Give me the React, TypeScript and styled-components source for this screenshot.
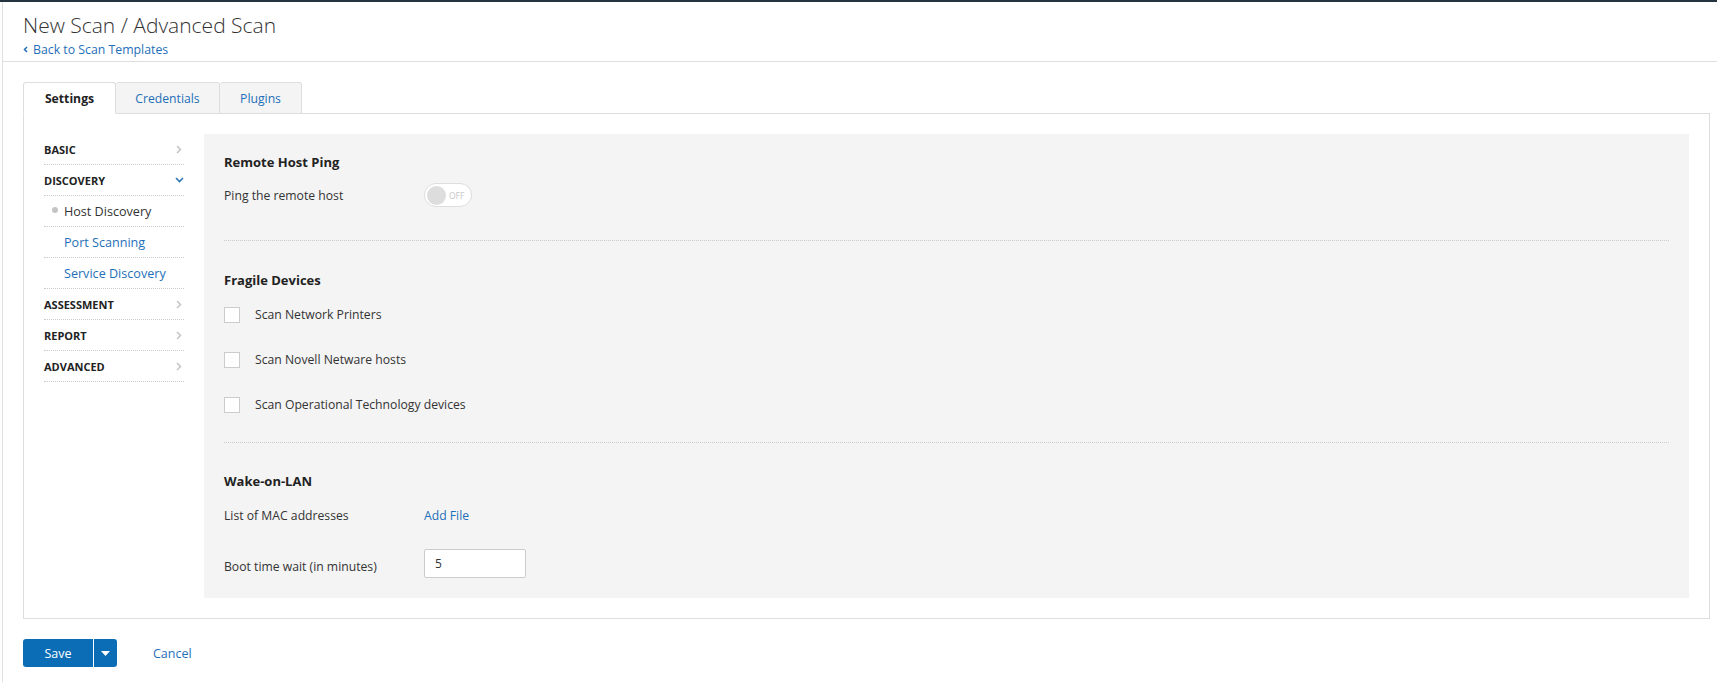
import React, { useState } from 'react';
import styled, { createGlobalStyle } from 'styled-components';

const GlobalStyle = createGlobalStyle`
  body {
    margin: 0;
    background: #fff;
    font-family: 'Open Sans', 'Noto Sans', sans-serif;
    font-size: 12.2px;
    color: #333;
  }
  * {
    box-sizing: border-box;
  }
`;

const TopBar = styled.div`
  height: 2px;
  background: #263440;
`;

const Page = styled.div`
  margin-left: 2px;
  min-height: 680px;
  border-left: 1px solid #e0e0e0;
`;

const Header = styled.div`
  height: 60px;
  padding: 10px 0 0 20px;
  border-bottom: 1px solid #ddd;
`;

const Title = styled.h1`
  margin: 0;
  font-size: 21px;
  font-weight: 300;
  line-height: 26px;
  color: #333;
`;

const BackLink = styled.a`
  display: flex;
  align-items: center;
  gap: 5px;
  margin-top: 3px;
  font-size: 12.3px;
  color: #1f6fb8;
  text-decoration: none;
  cursor: pointer;
`;

const Main = styled.div`
  padding: 20px 7px 0 20px;
`;

const TabRow = styled.div`
  display: flex;
  position: relative;
  z-index: 1;
  margin-bottom: -1px;
`;

const Tab = styled.div<{ $active?: boolean; $w: number }>`
  height: 32px;
  width: ${(p) => p.$w}px;
  display: flex;
  align-items: center;
  justify-content: center;
  border: 1px solid #ddd;
  border-left: ${(p) => (p.$active ? '1px solid #ddd' : 'none')};
  border-bottom: 1px solid ${(p) => (p.$active ? '#fff' : '#ddd')};
  border-radius: 3px 3px 0 0;
  background: ${(p) => (p.$active ? '#fff' : '#f4f4f4')};
  font-weight: ${(p) => (p.$active ? 700 : 400)};
  color: ${(p) => (p.$active ? '#222' : '#1f6fb8')};
  cursor: pointer;
`;

const Panel = styled.div`
  display: flex;
  gap: 20px;
  padding: 20px;
  border: 1px solid #ddd;
`;

const Nav = styled.div`
  width: 140px;
  flex-shrink: 0;
`;

const NavItem = styled.div<{ $sub?: boolean; $current?: boolean }>`
  height: 31px;
  display: flex;
  align-items: center;
  justify-content: space-between;
  padding: ${(p) => (p.$sub ? '0 0 0 20px' : '0')};
  border-bottom: 1px dotted #ccc;
  font-size: ${(p) => (p.$sub ? '12.6px' : '11px')};
  font-weight: ${(p) => (p.$sub ? 400 : 700)};
  color: ${(p) => (p.$sub ? (p.$current ? '#333' : '#1f6fb8') : '#222')};
  cursor: pointer;
  position: relative;
`;

const Bullet = styled.span`
  position: absolute;
  left: 8px;
  top: 50%;
  width: 6px;
  height: 6px;
  margin-top: -4px;
  border-radius: 50%;
  background: #c4c4c4;
`;

const Content = styled.div`
  flex: 1;
  background: #f4f4f4;
  padding: 0 20px;
`;

const Section = styled.div<{ $top: number; $bottom: number; $last?: boolean }>`
  padding: ${(p) => p.$top}px 0 ${(p) => p.$bottom}px;
  border-bottom: ${(p) => (p.$last ? 'none' : '1px dotted #ccc')};
`;

const SectionTitle = styled.h3`
  margin: 0;
  font-size: 13px;
  font-weight: 700;
  line-height: 20px;
  color: #222;
`;

const FieldRow = styled.div<{ $mt: number }>`
  display: flex;
  align-items: center;
  margin-top: ${(p) => p.$mt}px;
  min-height: 24px;
`;

const FieldLabel = styled.div<{ $shift?: number }>`
  width: 200px;
  flex-shrink: 0;
  padding-top: ${(p) => p.$shift || 0}px;
`;

const Toggle = styled.div`
  width: 48px;
  height: 24px;
  border: 1px solid #ddd;
  border-radius: 12px;
  background: #fff;
  display: flex;
  align-items: center;
  padding: 0 2px;
  gap: 3px;
  cursor: pointer;
`;

const Knob = styled.span`
  width: 19px;
  height: 19px;
  border-radius: 50%;
  background: #ddd;
`;

const ToggleText = styled.span`
  font-size: 8.5px;
  color: #c8c8c8;
`;

const CheckRow = styled.label<{ $mt: number }>`
  display: flex;
  align-items: center;
  gap: 15px;
  margin-top: ${(p) => p.$mt}px;
  cursor: pointer;
`;

const Box = styled.span`
  width: 16px;
  height: 16px;
  border: 1px solid #ccc;
  background: #fff;
`;

const LinkText = styled.a`
  color: #1f6fb8;
  cursor: pointer;
`;

const NumInput = styled.input`
  width: 102px;
  height: 29px;
  padding: 0 10px;
  border: 1px solid #ccc;
  border-radius: 2px;
  font-family: inherit;
  font-size: 12px;
  color: #333;
  outline: none;
`;

const Footer = styled.div`
  display: flex;
  align-items: center;
  margin-top: 20px;
  gap: 36px;
`;

const SplitButton = styled.div`
  display: flex;
  height: 28px;
  border-radius: 3px;
  overflow: hidden;
`;

const SaveButton = styled.button`
  width: 70px;
  border: none;
  background: #0b6db5;
  color: #fff;
  font-family: inherit;
  font-size: 12.5px;
  cursor: pointer;
`;

const CaretButton = styled.button`
  width: 24px;
  border: none;
  border-left: 1px solid #fff;
  background: #0b6db5;
  display: flex;
  align-items: center;
  justify-content: center;
  cursor: pointer;
`;

const CancelLink = styled.a`
  font-size: 12.5px;
  color: #1f6fb8;
  cursor: pointer;
`;

const Chevron = ({ down }: { down?: boolean }) =>
  down ? (
    <svg width="9" height="6" viewBox="0 0 9 6">
      <polyline points="1,1 4.5,4.5 8,1" fill="none" stroke="#2b79b8" strokeWidth="1.6" />
    </svg>
  ) : (
    <svg width="6" height="9" viewBox="0 0 6 9" style={{ marginRight: 2 }}>
      <polyline points="1,1 4.5,4.5 1,8" fill="none" stroke="#c4c4c4" strokeWidth="1.5" />
    </svg>
  );

const tabs = [
  { label: 'Settings', w: 93 },
  { label: 'Credentials', w: 104 },
  { label: 'Plugins', w: 82 },
];

const navItems = [
  { label: 'BASIC' },
  { label: 'DISCOVERY', open: true },
  { label: 'Host Discovery', sub: true, current: true },
  { label: 'Port Scanning', sub: true },
  { label: 'Service Discovery', sub: true },
  { label: 'ASSESSMENT' },
  { label: 'REPORT' },
  { label: 'ADVANCED' },
];

const fragile = ['Scan Network Printers', 'Scan Novell Netware hosts', 'Scan Operational Technology devices'];

const App = () => {
  const [tab, setTab] = useState('Settings');
  const [wait, setWait] = useState('5');

  return (
    <>
      <GlobalStyle />
      <TopBar />
      <Page>
        <Header>
          <Title>New Scan / Advanced Scan</Title>
          <BackLink>
            <svg width="5" height="7" viewBox="0 0 5 7">
              <polyline points="4,1 1.5,3.5 4,6" fill="none" stroke="#1f6fb8" strokeWidth="1.5" />
            </svg>
            Back to Scan Templates
          </BackLink>
        </Header>
        <Main>
          <TabRow>
            {tabs.map((t) => (
              <Tab key={t.label} $w={t.w} $active={tab === t.label} onClick={() => setTab(t.label)}>
                {t.label}
              </Tab>
            ))}
          </TabRow>
          <Panel>
            <Nav>
              {navItems.map((n) => (
                <NavItem key={n.label} $sub={n.sub} $current={n.current}>
                  {n.current ? <Bullet /> : null}
                  <span>{n.label}</span>
                  {!n.sub ? <Chevron down={n.open} /> : null}
                </NavItem>
              ))}
            </Nav>
            <Content>
              <Section $top={18} $bottom={33}>
                <SectionTitle>Remote Host Ping</SectionTitle>
                <FieldRow $mt={11}>
                  <FieldLabel>Ping the remote host</FieldLabel>
                  <Toggle>
                    <Knob />
                    <ToggleText>OFF</ToggleText>
                  </Toggle>
                </FieldRow>
              </Section>
              <Section $top={29} $bottom={29}>
                <SectionTitle>Fragile Devices</SectionTitle>
                {fragile.map((f, i) => (
                  <CheckRow key={f} $mt={i === 0 ? 16 : 28}>
                    <Box />
                    {f}
                  </CheckRow>
                ))}
              </Section>
              <Section $top={28} $bottom={20} $last>
                <SectionTitle>Wake-on-LAN</SectionTitle>
                <FieldRow $mt={12}>
                  <FieldLabel>List of MAC addresses</FieldLabel>
                  <LinkText>Add File</LinkText>
                </FieldRow>
                <FieldRow $mt={22}>
                  <FieldLabel $shift={6}>Boot time wait (in minutes)</FieldLabel>
                  <NumInput value={wait} onChange={(e) => setWait(e.target.value)} />
                </FieldRow>
              </Section>
            </Content>
          </Panel>
          <Footer>
            <SplitButton>
              <SaveButton>Save</SaveButton>
              <CaretButton>
                <svg width="9" height="5" viewBox="0 0 9 5">
                  <polygon points="0,0 9,0 4.5,5" fill="#fff" />
                </svg>
              </CaretButton>
            </SplitButton>
            <CancelLink>Cancel</CancelLink>
          </Footer>
        </Main>
      </Page>
    </>
  );
};

export default App;
